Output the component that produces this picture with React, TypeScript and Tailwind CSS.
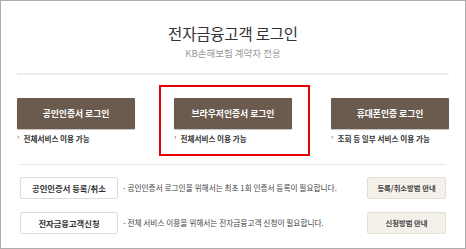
const font = { fontFamily: '"Noto Sans CJK KR", "Noto Sans", sans-serif' };

const logins = [
  { label: '공인인증서 로그인', note: '전체서비스 이용 가능' },
  { label: '브라우저인증서 로그인', note: '전체서비스 이용 가능', active: true },
  { label: '휴대폰인증 로그인', note: '조회 등 일부 서비스 이용 가능' },
];

const extras = [
  {
    label: '공인인증서 등록/취소',
    desc: '- 공인인증서 로그인을 위해서는 최초 1회 인증서 등록이 필요합니다.',
    guide: '등록/취소방법 안내',
  },
  {
    label: '전자금융고객신청',
    desc: '- 전체 서비스 이용을 위해서는 전자금융고객 신청이 필요합니다.',
    guide: '신청방법 안내',
  },
];

export default function App() {
  return (
    <div
      className="w-[466px] h-[249px] border border-[#adadad] bg-white flex flex-col"
      style={font}
    >
      <div className="flex flex-col items-center pt-[22px]">
        <h1 className="text-[15.5px] leading-[20px] text-[#333] tracking-[-0.2px]">
          전자금융고객 로그인
        </h1>
        <p className="mt-[4px] text-[9.5px] leading-[12px] text-[#999]">
          KB손해보험 계약자 전용
        </p>
      </div>

      <div className="mx-[16px] mt-[14px] h-[2px] bg-[#eeeeee]" />

      <div className="mt-[23px] px-[16px] grid grid-cols-[118px_118px_118px] justify-between">
        {logins.map((item) => (
          <div key={item.label} className="relative">
            {item.active && (
              <div className="absolute left-[-15px] right-[-18px] top-[-13px] bottom-[-12px] border-2 border-[#e60000]" />
            )}
            <button className="w-[118px] h-[31px] bg-[#6b5b4e] text-white text-[8.8px] font-bold rounded-[1px] shadow-[0_1px_1px_rgba(0,0,0,0.25)]">
              {item.label}
            </button>
            <p className="mt-[5px] text-[7.6px] leading-[10px] text-[#333] font-bold flex gap-[4px]">
              <span className="text-[#999]">'</span>
              {item.note}
            </p>
          </div>
        ))}
      </div>

      <div className="mx-[19px] mt-[20px] h-px bg-[#e8e8e8]" />

      <div className="mt-[12px] px-[19px] flex flex-col gap-[13px]">
        {extras.map((row) => (
          <div key={row.label} className="flex items-center">
            <button className="w-[98px] h-[22px] border border-[#dddddd] bg-white rounded-[2px] text-[8.3px] font-semibold text-[#333]">
              {row.label}
            </button>
            <span className="ml-[5px] text-[7.7px] text-[#444] flex-1">{row.desc}</span>
            <button className="w-[79px] h-[22px] border border-[#e3ded6] bg-[#f4f0ea] rounded-[2px] text-[7.3px] font-bold text-[#444]">
              {row.guide}
            </button>
          </div>
        ))}
      </div>
    </div>
  );
}
